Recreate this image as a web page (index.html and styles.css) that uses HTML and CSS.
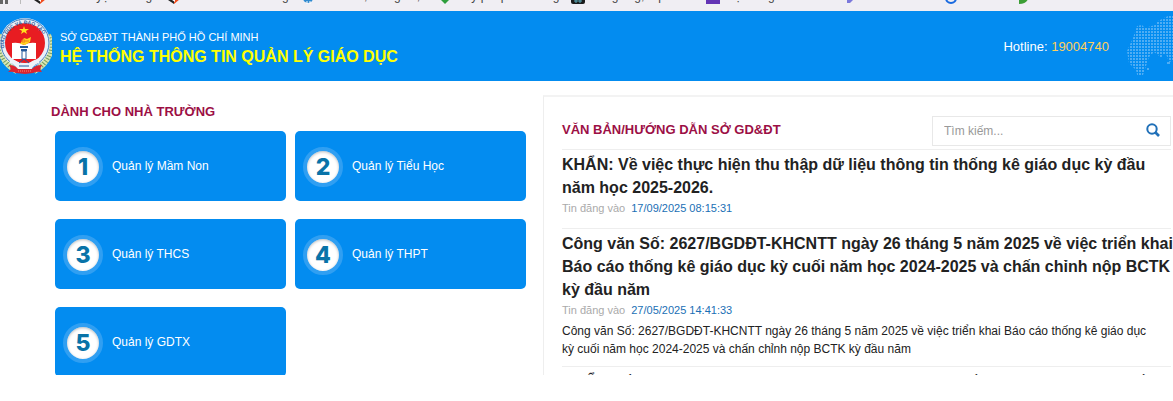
FILE: index.html
```html
<!DOCTYPE html>
<html lang="vi">

<head>
  <meta charset="utf-8" />
  <title>Hệ thống thông tin quản lý giáo dục</title>
  <link rel="stylesheet" href="styles.css">
</head>

<body>
  <nav class="bookmarks">
    <span class="apps"></span>
    <a href="#"><svg width="12" height="12" viewBox="0 0 12 12"><path d="M6 12L0 8V4l6 4z" fill="#222"/><path d="M6 12l6-5V3L6 8z" fill="#f04a1c"/><path d="M4 8l3-1v3z" fill="#fff"/></svg>Trình duyệt trường</a>
    <a href="#"><svg width="12" height="12" viewBox="0 0 12 12"><path d="M6 12L0 8V4l6 4z" fill="#222"/><path d="M6 12l6-5V3L6 8z" fill="#f04a1c"/><path d="M4 8l3-1v3z" fill="#fff"/></svg>Thi đua cao trường</a>
    <a href="#"><svg width="12" height="12" viewBox="0 0 12 12"><circle cx="6" cy="6" r="5" fill="#2f8ad0"/><path d="M5 9v3M8 9v3" stroke="#fff"/></svg>Báo cáo, thống kê, tin</a>
    <a href="#"><svg width="12" height="12" viewBox="0 0 12 12"><path d="M1 8h4l4-5v5l-4 4z" fill="#2e9e3c"/></svg>Lấy phép thi chung</a>
    <a href="#"><svg width="14" height="12" viewBox="0 0 14 12"><rect width="14" height="12" rx="2" fill="#1c1c1c"/><path d="M4 8h2v2H4zM8 8h2v2H8z" stroke="#5aa9b8" fill="none"/></svg>Bài giảng, lớp</a>
    <a href="#"><svg width="14" height="12" viewBox="0 0 14 12"><rect width="14" height="12" fill="#6334b5"/></svg>Hệ thống</a>
    <a href="#"><svg width="12" height="12" viewBox="0 0 12 12"><path d="M3 6h8l-5 5H3z" fill="#7b78dc"/></svg>Văn bản</a>
    <a href="#"><svg width="12" height="12" viewBox="0 0 12 12"><circle cx="6" cy="6" r="5" fill="none" stroke="#1769e0" stroke-width="2"/></svg>Tra cứu</a>
    <a href="#"><svg width="12" height="12" viewBox="0 0 12 12"><path d="M1 12V2h10c0 6-3 10-10 10z" fill="#3c9e35"/></svg></a>
  </nav>

  <header class="header">
    <svg class="emblem" width="52" height="58" viewBox="0 0 52 58">
      <path d="M3 18C-3 32 2 46 17 54M48 18c6 14 1 28-14 36" fill="none" stroke="#d9e6b0" stroke-width="6"/>
      <path d="M3 18C-3 32 2 46 17 54M48 18c6 14 1 28-14 36" fill="none" stroke="#6f9a63" stroke-width="5" stroke-dasharray="1 2"/>
      <circle cx="25" cy="26" r="25" fill="#e9f0f8"/>
      <circle cx="25" cy="26" r="24" fill="none" stroke="#4b83bd"/>
      <circle cx="25" cy="26" r="20" fill="#e81c22"/>
      <path id="ring" d="M6 37A21 21 0 1 1 44 37" fill="none"/>
      <text class="ring-text"><textPath href="#ring" startOffset="6">GIÁO DỤC VÀ ĐÀO TẠO</textPath></text>
      <path d="M24 9l1 3h4l-3 2 1 3-3-2-3 2 1-3-3-2h4z" fill="#ffe21c"/>
      <path d="M12 26q7-1 12 2q5-3 12-2v16H12z" fill="#fff"/>
      <path d="M10 42q8 1 10 7l4-3 4 3q2-6 11-7v4q-5 1-8 7H18q-3-6-8-7z" fill="#eef3f9"/>
      <path d="M20 27l4-6 3 1 4-2-1 5-5 3z" fill="#ffd51e"/>
      <path d="M22 23h3v2h-3zM26 24h3" stroke="#f27a1a" fill="none"/>
      <path d="M20 30h8M21 33h6" fill="none" stroke="#245b9c" stroke-width="2"/>
      <path d="M22 34h4v8h-4zM19 46l5-4 5 4M19 49h10" fill="none" stroke="#245b9c"/>
      <path d="M9 48q6 0 9 4h14q3-4 10-4l-2 4 2 3q-6-1-9 1l-8 1-9-1q-3-2-8-1l3-3z" fill="#dc2430"/>
      <path d="M18 54h14" stroke="#f58d77" stroke-dasharray="1 1"/>
    </svg>
    <div class="brand">
      <p class="department">SỞ GD&amp;ĐT THÀNH PHỐ HỒ CHÍ MINH</p>
      <h1>HỆ THỐNG THÔNG TIN QUẢN LÝ GIÁO DỤC</h1>
    </div>
    <p class="hotline">Hotline: <span>19004740</span></p>
    <svg class="map" width="46" height="60" viewBox="0 0 46 60">
      <defs>
        <pattern id="dots" width="3" height="3" patternUnits="userSpaceOnUse"><rect width="2" height="2" fill="#4fadf4"/></pattern>
      </defs>
      <path d="M0 35L6 22l4-12 5-1 3 3 10-3 3-4 6-3 4-2h5v45l-4 1-3-8-3 1-2 3-3-3-4-3-5 5-3 9-4 12h-4l-2-8-7-7z" fill="url(#dots)"/>
      <path d="M20 52h2v2h-2zM40 46h3v2h-3z" fill="#4fadf4"/>
    </svg>
  </header>

  <main class="content">
    <section class="schools">
      <h2>DÀNH CHO NHÀ TRƯỜNG</h2>
      <div class="cards">
        <a class="card" href="#"><span class="num">1</span>Quản lý Mầm Non</a>
        <a class="card" href="#"><span class="num">2</span>Quản lý Tiểu Học</a>
        <a class="card" href="#"><span class="num">3</span>Quản lý THCS</a>
        <a class="card" href="#"><span class="num">4</span>Quản lý THPT</a>
        <a class="card" href="#"><span class="num">5</span>Quản lý GDTX</a>
      </div>
    </section>

    <section class="news">
      <div class="news-head">
        <h2>VĂN BẢN/HƯỚNG DẪN SỞ GD&amp;ĐT</h2>
        <form class="search">
          <input type="text" placeholder="Tìm kiếm..." aria-label="Tìm kiếm">
          <button type="button" aria-label="Tìm">
            <svg width="14" height="14" viewBox="0 0 14 14"><circle cx="6" cy="6" r="4.7" fill="none" stroke="#2070b8" stroke-width="2"/><path d="M9 9l4 4" stroke="#2070b8" stroke-width="2.6"/></svg>
          </button>
        </form>
      </div>
      <article>
        <h3>KHẨN: Về việc thực hiện thu thập dữ liệu thông tin thống kê giáo dục kỳ đầu<br> năm học 2025-2026.</h3>
        <p class="date">Tin đăng vào <time>17/09/2025 08:15:31</time></p>
      </article>
      <article>
        <h3>Công văn Số: 2627/BGDĐT-KHCNTT ngày 26 tháng 5 năm 2025 về việc triển khai<br> Báo cáo thống kê giáo dục kỳ cuối năm học 2024-2025 và chấn chỉnh nộp BCTK<br> kỳ đầu năm</h3>
        <p class="date">Tin đăng vào <time>27/05/2025 14:41:33</time></p>
        <p class="summary">Công văn Số: 2627/BGDĐT-KHCNTT ngày 26 tháng 5 năm 2025 về việc triển khai Báo cáo thống kê giáo dục<br> kỳ cuối năm học 2024-2025 và chấn chỉnh nộp BCTK kỳ đầu năm</p>
      </article>
      <article>
        <h3>KHẨN: Về việc thực hiện thu thập dữ liệu thông tin thống kê giáo dục kỳ cuối</h3>
      </article>
    </section>
  </main>
</body>

</html>
```
FILE: styles.css
```css
/*
  site colors:
    blue      #038cf0
    maroon    #9c0f45
    link      #1a6fb5
 */
* {
  box-sizing: border-box;
}

body {
  display: flex;
  flex-direction: column;
  height: 100vh;
  margin: 0;
  padding-bottom: 26px;
  overflow: hidden;
  background-color: #fff;
  color: #222;
  font-family: "Liberation Sans", Arial, sans-serif;
  font-size: 13px;
}

h1, h2, h3, p {
  margin: 0;
}

a {
  text-decoration: none;
}

.bookmarks {
  display: grid;
  grid-template-columns: 34fr 134fr 134fr 138fr 131fr 135fr 138fr 101fr 73fr 155fr;
  align-content: end;
  align-items: end;
  flex: none;
  height: 11px;
  padding-bottom: 7px;
  overflow: hidden;
  background-color: #f0eef3;
}

.bookmarks a {
  display: flex;
  align-items: flex-end;
  gap: 6px;
  color: #444;
  font-size: 12px;
  line-height: 16px;
  white-space: nowrap;
}

.bookmarks svg {
  flex: none;
}

.apps {
  width: 21px;
  height: 4px;
  border-right: 1px solid #bbb;
  background: linear-gradient(90deg, #666 3px, transparent 3px, transparent 5px, #666 5px, #666 8px, transparent 8px);
}

.header {
  display: flex;
  align-items: center;
  flex: none;
  height: 70px;
  background-color: #038cf0;
  color: #fff;
}

.emblem {
  flex: none;
}

.ring-text {
  fill: #2c62a0;
  font-size: 5px;
  font-weight: bold;
}

.brand {
  flex: 1;
  padding: 3px 0 0 8px;
}

.department {
  font-size: 11px;
  line-height: 18px;
}

h1 {
  color: #ff0;
  font-size: 16px;
  line-height: 22px;
}

.hotline {
  margin-right: 18px;
}

.hotline span {
  color: #ffcf5c;
}

.content {
  display: grid;
  grid-template-columns: 543fr 630fr;
  flex: 1;
  min-height: 0;
  padding-top: 14px;
  overflow: hidden;
}

h2 {
  color: #9c0f45;
  font-size: 13px;
  line-height: 18px;
}

.schools {
  padding: 8px 17px 0 51px;
}

.cards {
  display: grid;
  grid-template-columns: 1fr 1fr;
  gap: 18px 9px;
  padding: 10px 0 0 4px;
}

.card {
  display: flex;
  align-items: center;
  gap: 9px;
  height: 70px;
  padding-left: 8px;
  border-radius: 5px;
  background-color: #038cf0;
  color: #fff;
  font-size: 12px;
}

.num {
  width: 40px;
  height: 40px;
  margin-top: 2px;
  border: 4px solid #309ff2;
  border-radius: 50%;
  background-color: #fff;
  box-shadow: inset 0 1px 3px #bbb;
  color: #0873a8;
  font-family: Inter, sans-serif;
  font-size: 23px;
  font-weight: 800;
  line-height: 33px;
  text-align: center;
}

.news {
  min-width: 0;
  padding: 19px 2px 0 18px;
  border-top: 2px solid #f3f3f3;
  border-left: 1px solid #eee;
}

.news-head {
  display: flex;
  justify-content: space-between;
  padding-bottom: 3px;
}

.news-head h2 {
  padding-top: 5px;
}

.search {
  display: flex;
  width: 239px;
  height: 30px;
  border: 1px solid #e8e8e8;
}

.search input {
  flex: 1;
  min-width: 0;
  padding: 0 11px;
  border: none;
  outline: none;
  font: inherit;
  font-size: 12px;
}

.search input::placeholder {
  color: #999;
}

.search button {
  padding: 0 10px;
  border: none;
  background: none;
}

article {
  padding: 3px 0 8px;
  border-top: 1px solid #eee;
}

h3 {
  font-size: 16px;
  line-height: 23px;
  white-space: nowrap;
}

.date {
  margin-bottom: 3px;
  color: #aaa;
  font-size: 11px;
  line-height: 18px;
}

.date time {
  margin-left: 3px;
  color: #1a6fb5;
}

.summary {
  font-size: 12px;
  line-height: 18px;
  white-space: nowrap;
}
```
